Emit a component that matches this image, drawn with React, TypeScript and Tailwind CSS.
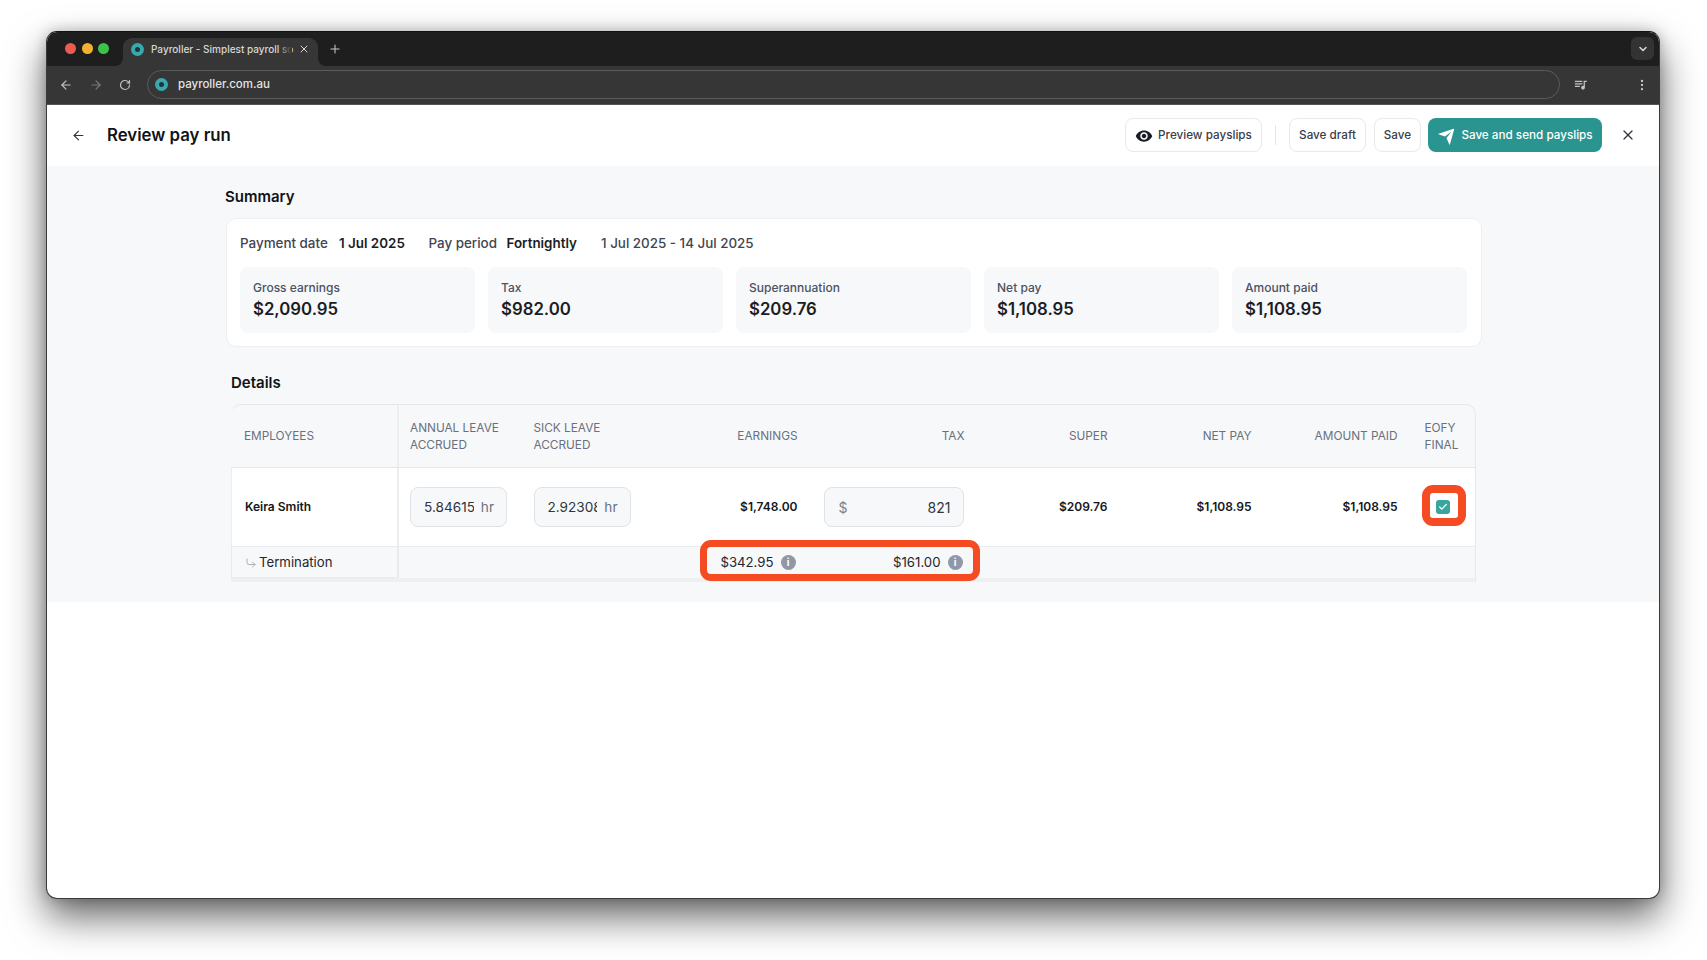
import { ArrowLeft, ArrowRight, Check, ChevronDown, CornerDownRight, EllipsisVertical, Plus, RotateCw, X } from "lucide-react";
import { MdQueueMusic, MdVisibility } from "react-icons/md";
import { RiSendPlaneFill } from "react-icons/ri";

const stats = [
  { label: "Gross earnings", value: "$2,090.95" },
  { label: "Tax", value: "$982.00" },
  { label: "Superannuation", value: "$209.76" },
  { label: "Net pay", value: "$1,108.95" },
  { label: "Amount paid", value: "$1,108.95" },
];

const cols = "grid grid-cols-[168px_122.5px_122px_166px_168px_142px_144px_146px_1fr]";

function Favicon() {
  return <span className="block w-[13px] h-[13px] rounded-full border-[4px] border-[#38a9ad] bg-[#20333a] shrink-0" />;
}

function InfoDot() {
  return (
    <span className="w-[15px] h-[15px] rounded-full bg-[#9097a6] text-white text-[10px] font-bold flex items-center justify-center shrink-0">
      i
    </span>
  );
}

function HourInput({ value }: { value: string }) {
  return (
    <div className="w-[97px] h-[40px] rounded-lg border border-[#dfe2e7] bg-[#f7f8fa] flex items-center pl-[13px] pr-[12px] gap-[7px] text-[13.6px] font-normal">
      <input readOnly value={value} className="w-[51px] min-w-0 text-[#30343c] outline-none bg-transparent" />
      <span className="text-[#6a7180]">hr</span>
    </div>
  );
}

export default function App() {
  return (
    <div className="w-[1707px] h-[960px] bg-white overflow-hidden pt-[31px] pl-[46px] [font-family:Inter,sans-serif]">
      <div className="w-[1614px] h-[868px] rounded-[11px] bg-white overflow-hidden flex flex-col shadow-[0_18px_38px_rgba(0,0,0,0.6),0_0_14px_rgba(0,0,0,0.22)] border border-[#3a3a3a] border-t-[#111]">
        {/* tab strip */}
        <div className="h-[34px] bg-[#1e1e1e] flex items-end pl-[18px] pr-[5px] shrink-0">
          <div className="flex items-center gap-[5.5px] h-[34px] w-[58px] shrink-0 pb-[2px]">
            <span className="w-[11px] h-[11px] rounded-full bg-[#ee5a50]" />
            <span className="w-[11px] h-[11px] rounded-full bg-[#f3b233]" />
            <span className="w-[11px] h-[11px] rounded-full bg-[#3dc14b]" />
          </div>
          <div className="relative w-[195px] h-[28px] bg-[#363636] rounded-t-[9px] flex items-center pl-[8px] pr-[7px] pb-[6px] shrink-0">
            <span className="absolute -left-[8px] bottom-0 w-[8px] h-[8px] bg-[#363636]">
              <span className="block w-[8px] h-[8px] bg-[#1e1e1e] rounded-br-[8px]" />
            </span>
            <span className="absolute -right-[8px] bottom-0 w-[8px] h-[8px] bg-[#363636]">
              <span className="block w-[8px] h-[8px] bg-[#1e1e1e] rounded-bl-[8px]" />
            </span>
            <Favicon />
            <div className="relative w-[143px] ml-[7px] whitespace-nowrap text-[10px] text-[#d6d6d6] font-medium">
              Payroller - Simplest payroll so
              <span className="absolute right-[2px] top-0 h-full w-[14px] bg-gradient-to-r from-transparent to-[#363636]" />
            </div>
            <X className="ml-[4px] text-[#d8d8d8] shrink-0" size={12} strokeWidth={2} />
          </div>
          <Plus className="ml-[10px] mb-[10px] text-[#c8c8c8]" size={14} strokeWidth={1.8} />
          <div className="ml-auto mb-[6px] w-[23px] h-[23px] rounded-md bg-[#333333] flex items-center justify-center">
            <ChevronDown className="text-[#d8d8d8]" size={12} strokeWidth={3} />
          </div>
        </div>

        {/* toolbar */}
        <div className="h-[39px] bg-[#363636] flex items-center shrink-0 border-b border-[#555] pb-[1px]">
          <ArrowLeft className="ml-[12px] text-[#c4c4c4]" size={14} />
          <ArrowRight className="ml-[16px] text-[#7b7b7b]" size={14} />
          <RotateCw className="ml-[16px] text-[#c4c4c4]" size={12} strokeWidth={2.4} />
          <div className="ml-[16px] w-[1413px] h-[29px] rounded-full border border-[#5b5b5b] bg-[#363636] flex items-center pl-[7px] gap-[10px]">
            <Favicon />
            <span className="text-[11.5px] font-medium text-[#e4e4e4]">payroller.com.au</span>
          </div>
          <MdQueueMusic className="ml-[13px] text-[#c4c4c4]" size={15} />
          <EllipsisVertical className="ml-[47px] text-[#c4c4c4]" size={14} />
        </div>

        {/* page header */}
        <div className="h-[61px] bg-white flex items-center shrink-0 pl-[24px]">
          <ArrowLeft className="text-[#30343c]" size={15} strokeWidth={1.8} />
          <h1 className="ml-[21px] text-[16.8px] font-semibold text-[#111318]">Review pay run</h1>
          <div className="ml-auto flex items-center text-[11.7px] font-medium text-[#3a404b] -translate-y-px">
            <button className="w-[137px] h-[34px] pt-[3px] rounded-lg border border-[#e7e9ed] bg-white flex items-center justify-center gap-[5px]">
              <MdVisibility className="text-[#1a1d23]" size={18} />
              Preview payslips
            </button>
            <span className="w-px h-[20px] bg-[#e4e6ea] mx-[13px]" />
            <button className="w-[77px] h-[34px] pt-[3px] rounded-lg border border-[#e7e9ed] bg-white">Save draft</button>
            <button className="w-[47px] h-[34px] pt-[3px] rounded-lg border border-[#e7e9ed] bg-white ml-[8px]">Save</button>
            <button className="w-[174px] h-[34px] pt-[3px] rounded-lg bg-[#2a9490] text-white flex items-center justify-center gap-[5px] ml-[7px]">
              <RiSendPlaneFill size={19} />
              Save and send payslips
            </button>
            <X className="ml-[18px] mr-[23px] text-[#30343c]" size={16} strokeWidth={1.8} />
          </div>
        </div>

        {/* main */}
        <div className="relative h-[436px] bg-[#f7f8fa] pl-[179px] shrink-0">
          <h2 className="pt-[21px] -ml-px text-[15px] leading-[20px] font-semibold text-[#111318]">Summary</h2>
          <div className="mt-[11px] w-[1256px] h-[129px] bg-white rounded-[10px] border border-[#eceef1] pt-[15px] pl-[13px] pr-[14px]">
            <div className="flex items-center h-[18px] text-[13.4px] font-medium whitespace-nowrap">
              <span className="text-[#3f4551] w-[99px]">Payment date</span>
              <span className="text-[#1a1d23] font-semibold w-[89.5px]">1 Jul 2025</span>
              <span className="text-[#3f4551] w-[78px]">Pay period</span>
              <span className="text-[#1a1d23] font-semibold w-[94.5px]">Fortnightly</span>
              <span className="text-[#3f4551]">1 Jul 2025 - 14 Jul 2025</span>
            </div>
            <div className="mt-[15px] grid grid-cols-5 gap-[13px]">
              {stats.map((s) => (
                <div key={s.label} className="h-[66px] rounded-lg bg-[#f7f8fa] pl-[13px] pt-[13px]">
                  <div className="text-[12px] leading-[16px] font-medium text-[#4b5261]">{s.label}</div>
                  <div className="mt-[1px] text-[16.8px] leading-[24px] font-semibold text-[#1a1d23]">{s.value}</div>
                </div>
              ))}
            </div>
          </div>

          <h2 className="ml-[5px] mt-[25.5px] text-[15px] leading-[20px] font-semibold text-[#111318]">Details</h2>

          <div className="ml-[5px] mt-[11.5px] w-[1245px] rounded-t-[10px] border-t border-r border-[#e6e8ec]">
            <div className={`${cols} h-[63px] items-center text-[11.8px] leading-[17.5px] text-[#697080] border-b border-[#e4e6ea]`}>
              <div className="pl-[13px] pt-[2px] h-full flex items-center border-r-2 border-[#eceef1]">EMPLOYEES</div>
              <div className="pl-[11px] pt-[2px]">ANNUAL LEAVE<br />ACCRUED</div>
              <div className="pl-[12px] pt-[2px]">SICK LEAVE<br />ACCRUED</div>
              <div className="pr-[12px] pt-[2px] text-right">EARNINGS</div>
              <div className="pr-[13px] pt-[2px] text-right">TAX</div>
              <div className="pr-[12px] pt-[2px] text-right">SUPER</div>
              <div className="pr-[12px] pt-[2px] text-right">NET PAY</div>
              <div className="pr-[12px] pt-[2px] text-right">AMOUNT PAID</div>
              <div className="pl-[15px] pt-[2px]">EOFY<br />FINAL</div>
            </div>

            <div className={`${cols} h-[79px] items-center bg-white text-[12px] font-semibold text-[#14161b] border-b border-[#e9ebee]`}>
              <div className="pl-[13px] h-full flex items-center border-l border-r-2 border-[#eceef1]">Keira Smith</div>
              <div className="pl-[11px]"><HourInput value="5.84615" /></div>
              <div className="pl-[12px]"><HourInput value="2.92308" /></div>
              <div className="pr-[12px] text-right">$1,748.00</div>
              <div className="pr-[14px] flex justify-end">
                <div className="w-[140px] h-[40px] rounded-lg border border-[#dfe2e7] bg-[#f7f8fa] flex items-center justify-between pl-[14px] pr-[12px] text-[14px] font-normal text-[#30343c]">
                  <span className="text-[#7c8391]">$</span>
                  <span>821</span>
                </div>
              </div>
              <div className="pr-[12px] text-right">$209.76</div>
              <div className="pr-[12px] text-right">$1,108.95</div>
              <div className="pr-[12px] text-right">$1,108.95</div>
              <div className="flex justify-center pl-[1px]">
                <span className="w-[14px] h-[14px] rounded-[3px] bg-[#38a59f] flex items-center justify-center">
                  <Check className="text-white" size={10} strokeWidth={3} />
                </span>
              </div>
            </div>

            <div className={`${cols} h-[31px] items-center text-[13.2px] font-normal text-[#23262d]`}>
              <div className="pl-[13px] pt-[1px] h-full flex items-center gap-[2px] bg-[#f7f8fa] border-l border-b border-r-2 border-[#e8eaed]">
                <CornerDownRight className="text-[#a9aeb8]" size={12} />
                Termination
              </div>
              <div />
              <div />
              <div className="pr-[14px] flex items-center justify-end gap-[7px]">$342.95<InfoDot /></div>
              <div className="pr-[15px] flex items-center justify-end gap-[7px]">$161.00<InfoDot /></div>
            </div>
            <div className="h-[4px] bg-[#eeeff1]" />
          </div>

          {/* highlight boxes */}
          <div className="absolute left-[653px] top-[374px] w-[280px] h-[41px] rounded-[11px] border-[7.5px] border-[#f44b22]" />
          <div className="absolute left-[1375px] top-[319px] w-[44px] h-[41px] rounded-[11px] border-[8px] border-[#f44b22]" />
        </div>
      </div>
    </div>
  );
}
